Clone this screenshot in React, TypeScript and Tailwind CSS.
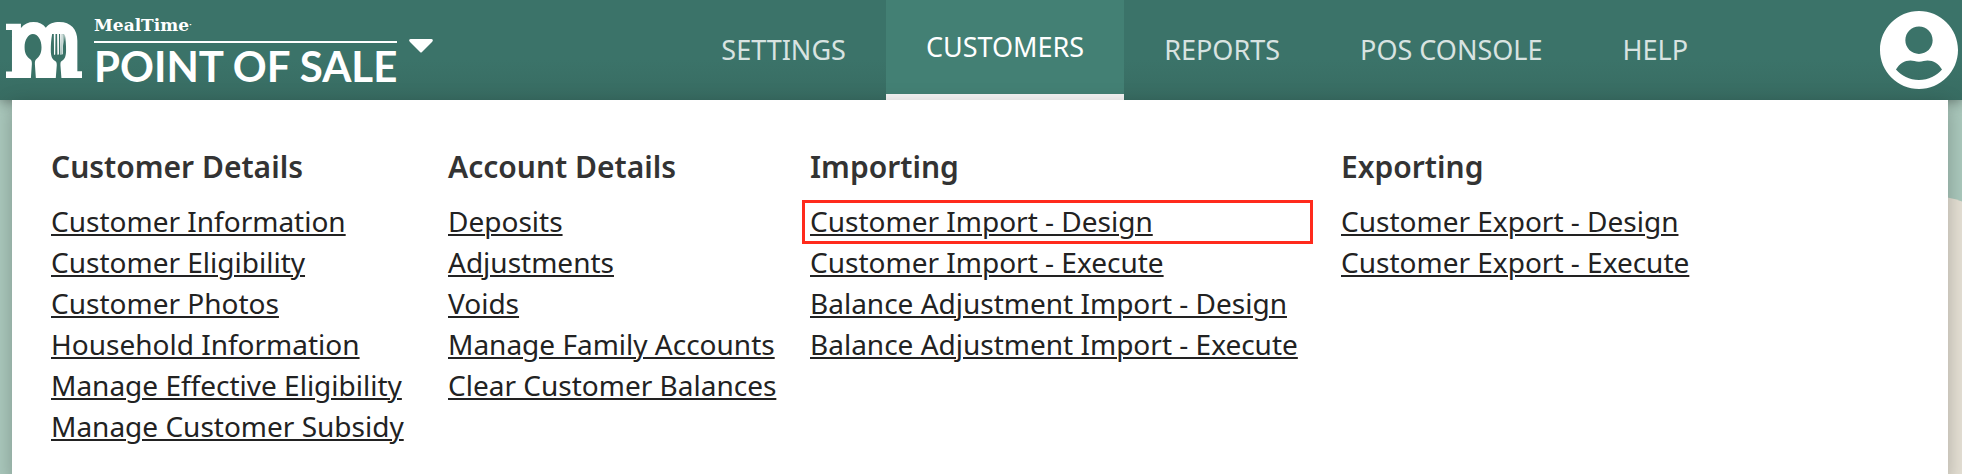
import clsx from "clsx";

type MenuLink = {
  label: string;
  highlighted?: boolean;
};

type MenuGroup = {
  title: string;
  links: MenuLink[];
};

const navItems = ["Settings", "Customers", "Reports", "POS Console", "Help"];

const menuGroups: MenuGroup[] = [
  {
    title: "Customer Details",
    links: [
      { label: "Customer Information" },
      { label: "Customer Eligibility" },
      { label: "Customer Photos" },
      { label: "Household Information" },
      { label: "Manage Effective Eligibility" },
      { label: "Manage Customer Subsidy" },
    ],
  },
  {
    title: "Account Details",
    links: [
      { label: "Deposits" },
      { label: "Adjustments" },
      { label: "Voids" },
      { label: "Manage Family Accounts" },
      { label: "Clear Customer Balances" },
    ],
  },
  {
    title: "Importing",
    links: [
      { label: "Customer Import - Design", highlighted: true },
      { label: "Customer Import - Execute" },
      { label: "Balance Adjustment Import - Design" },
      { label: "Balance Adjustment Import - Execute" },
    ],
  },
  {
    title: "Exporting",
    links: [
      { label: "Customer Export - Design" },
      { label: "Customer Export - Execute" },
    ],
  },
];

const LogoMark = () => (
  <svg viewBox="17 36 229 168" className="h-14 w-[76px] shrink-0" aria-hidden="true">
    <path
      fill="#fff"
      d="M17 41H62V54C72 42 85 36 100 36C116 36 129 42 137 53C147 41 160 36 178 36C212 36 232 58 232 92V184H246V204H17V185H35V60H17Z"
    />
    {/* spoon */}
    <path
      fill="#3a7267"
      d="M98 72C113 72 124 90 124 112C124 131 117 141 108 148C105 151 104 155 104 162L107 204H92L95 162C95 155 94 151 90 148C80 141 73 131 73 112C73 90 84 72 98 72Z"
    />
    {/* fork */}
    <path
      fill="#3a7267"
      d="M156 72H161L162 134H165L166 72H171L172 134H175L176 72H180L181 134H184L185 72H190L191 134H188L194 72C197 90 198 105 198 120C198 142 193 148 184 154C181 156 181 160 181 166L184 204H167L170 166C170 160 169 156 166 154C157 148 152 142 152 120C152 105 153 90 156 72Z"
    />
    <path stroke="#fff" strokeWidth="3" d="M163.500 72V133M175 72V133M186.500 72V133" />
  </svg>
);

const Brand = () => (
  <div className="flex items-center gap-3 pl-[6px] text-white">
    <LogoMark />
    <div className="flex flex-col pt-[2px]">
      <span className="border-b-2 border-white pb-1 font-['DejaVu_Serif','Liberation_Serif',serif] text-[17px] leading-6 font-bold">
        MealTime<sup className="text-[8px]">·</sup>
      </span>
      <span className="font-[Lato,sans-serif] text-[42px] leading-[46px] font-bold whitespace-nowrap">
        POINT OF SALE
      </span>
    </div>
    <button type="button" aria-label="Switch application">
      <svg viewBox="0 0 24 14" className="mb-2 h-[14px] w-6" aria-hidden="true">
        <path fill="#fff" d="M1.500 0H22.500Q25 .5 23 3L13 13Q12 14 11 13L1 3Q-1 .5 1.500 0Z" />
      </svg>
    </button>
  </div>
);

const App = () => {
  const activeItem = "Customers";

  return (
    <div className="relative flex min-h-screen flex-col overflow-hidden bg-[#abc9bd] font-['Noto_Sans',sans-serif]">
      <div className="absolute top-[196px] -right-16 h-[600px] w-48 rounded-t-full bg-[#e6e1d5]" />

      <header className="relative flex h-[100px] items-stretch justify-between bg-linear-to-b from-[#3b7369] from-60% to-[#386c62] shadow-[0_2px_12px_rgba(0,0,0,0.4)]">
        <Brand />
        <nav className="flex flex-1 items-stretch justify-center pl-24">
          {navItems.map((item) => (
            <a
              key={item}
              href="#"
              className={clsx(
                "flex items-center px-10 text-[27px] whitespace-nowrap uppercase",
                activeItem === item
                  ? "border-b-[6px] border-[#f5f5f5] bg-[#438074] text-white"
                  : "text-[#d8e3e1]"
              )}
            >
              {item}
            </a>
          ))}
        </nav>
        <button type="button" aria-label="Account" className="pr-1">
          <svg viewBox="2 2 20 20" className="size-[78px]" aria-hidden="true">
            <path
              fill="#fff"
              d="M12 2C6.480 2 2 6.480 2 12s4.480 10 10 10 10-4.480 10-10S17.520 2 12 2zm0 4c1.930 0 3.500 1.570 3.500 3.500S13.930 13 12 13s-3.500-1.570-3.500-3.500S10.070 6 12 6zm0 13.700c-2.500 0-4.500-1.100-5.900-2.700.9-1.500 2.200-2.300 3.700-2.300.7 0 1.300.3 2.200.3s1.500-.3 2.200-.3c1.500 0 2.800.8 3.700 2.300-1.400 1.600-3.400 2.700-5.900 2.700z"
            />
          </svg>
        </button>
      </header>

      <main className="relative mr-[14px] ml-3 grid flex-1 grid-cols-[365fr_330fr_499fr_575fr] content-start gap-8 bg-white pt-[44px] pr-8 pb-8 pl-[39px] shadow-[0_6px_20px_rgba(0,0,0,0.25)]">
        {menuGroups.map((group) => (
          <section key={group.title}>
            <h2 className="mb-3 text-[30px] leading-[45px] font-semibold text-[#333]">
              {group.title}
            </h2>
            <ul className="text-[28px] leading-[41px] whitespace-nowrap text-[#222]">
              {group.links.map((link) => (
                <li key={link.label} className="relative">
                  <a href="#" className="underline decoration-2 underline-offset-2">
                    {link.label}
                  </a>
                  {link.highlighted && (
                    <span className="pointer-events-none absolute -top-px -right-1 -bottom-0.5 -left-2 border-3 border-[#ff2a1c]" />
                  )}
                </li>
              ))}
            </ul>
          </section>
        ))}
      </main>
    </div>
  );
};

export default App;
